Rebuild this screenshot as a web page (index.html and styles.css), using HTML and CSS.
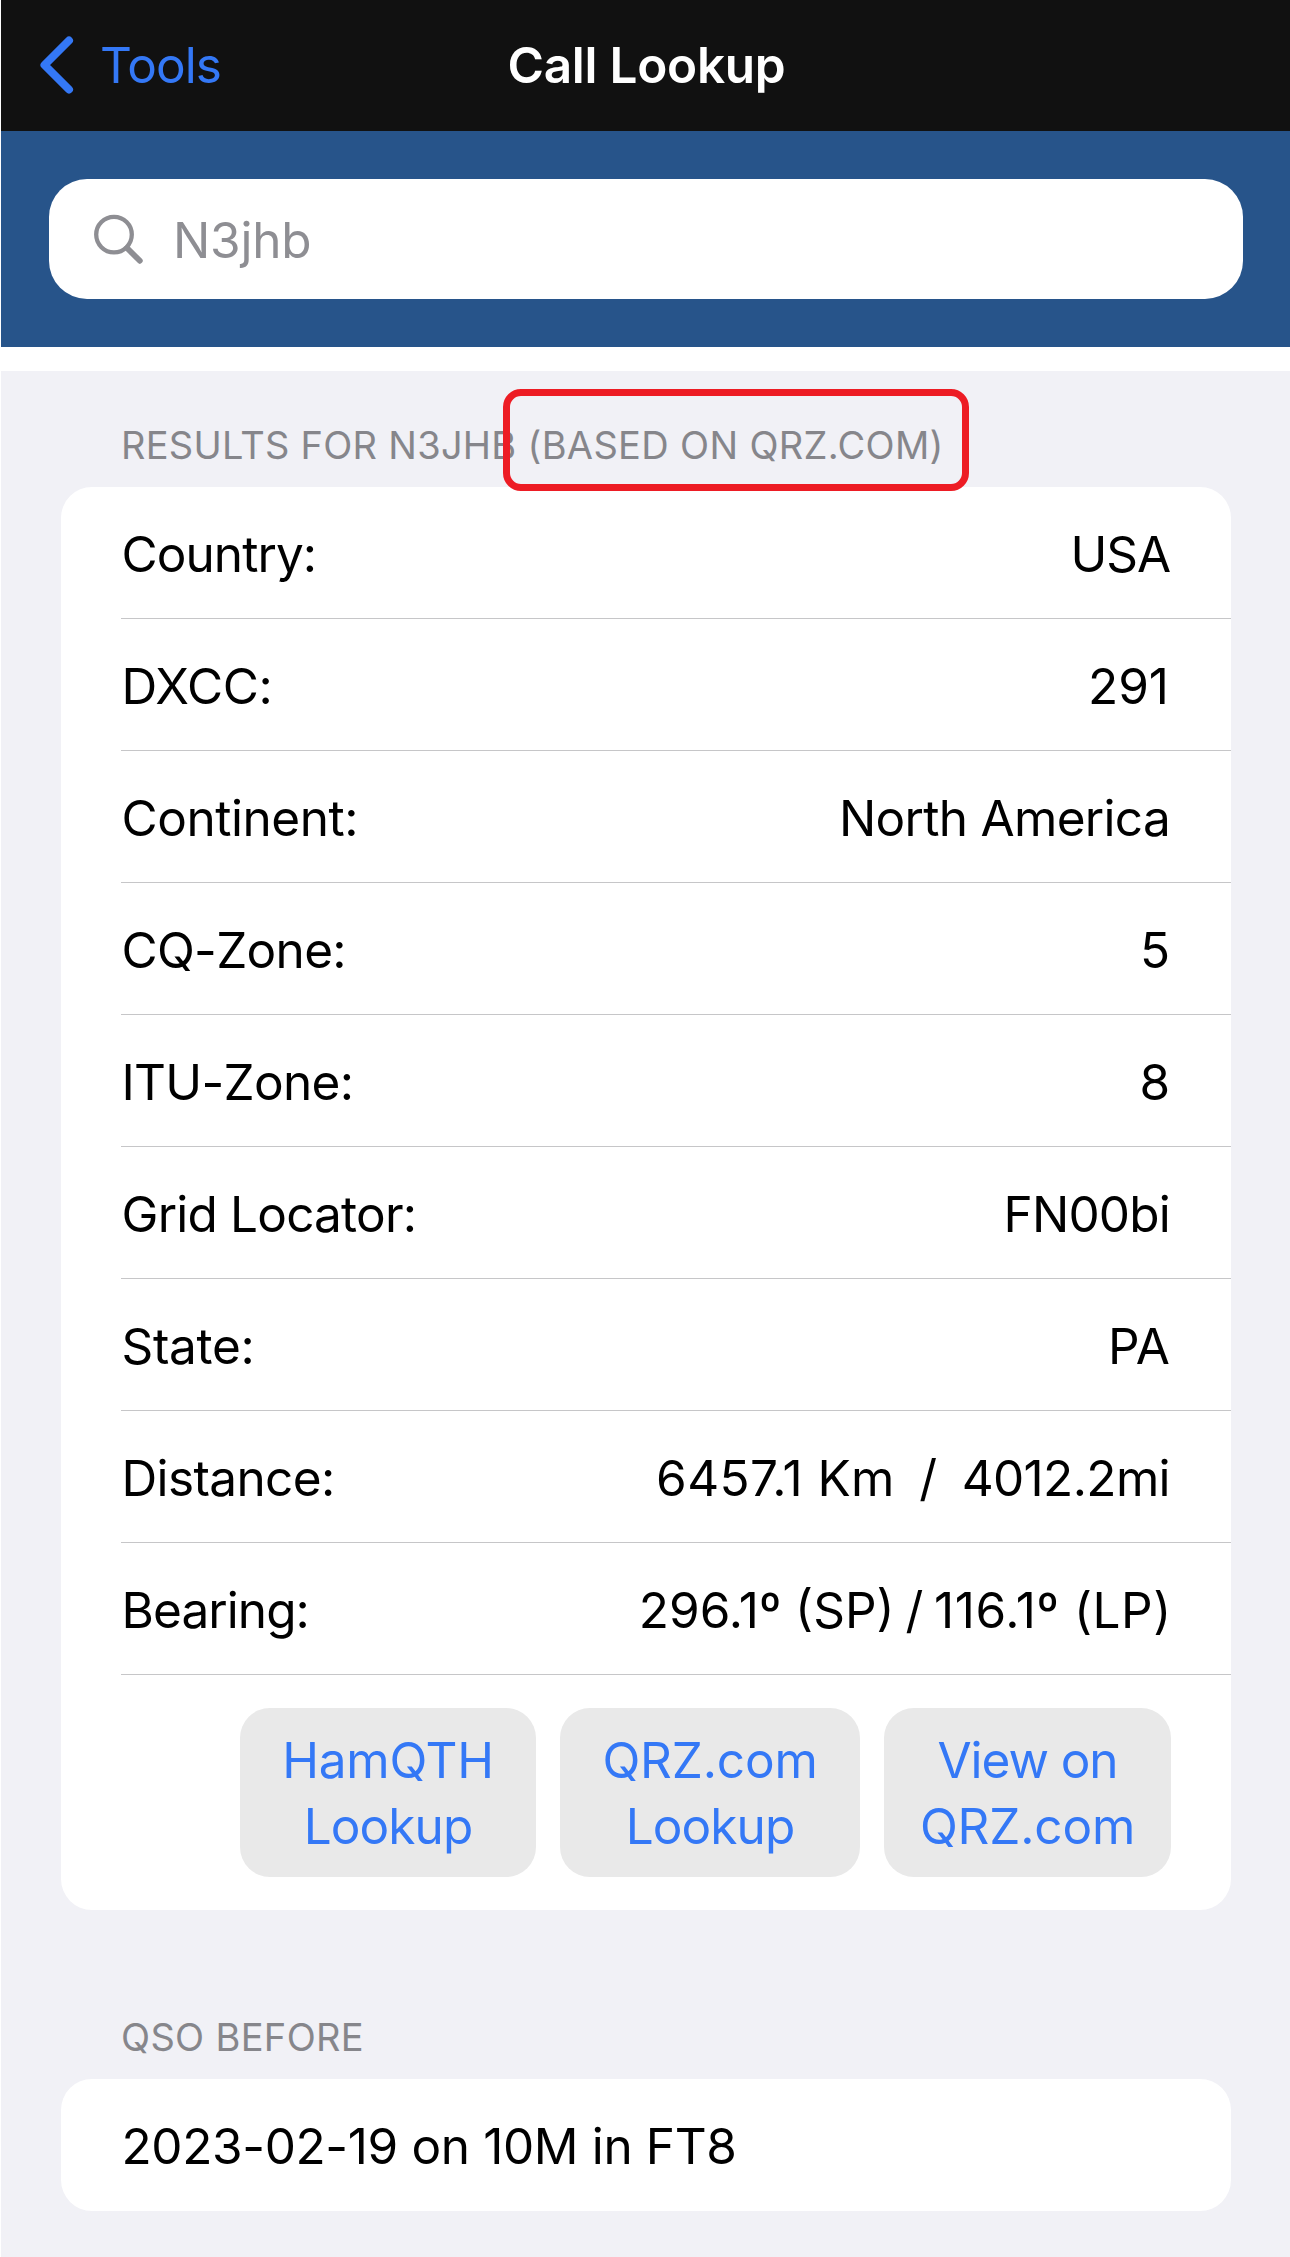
FILE: index.html
```
<!DOCTYPE html>
<html lang="en">
<head>
<meta charset="utf-8">
<title>Call Lookup</title>
<link rel="stylesheet" href="styles.css">
</head>
<body>
<header class="nav">
  <a class="back">
    <svg class="chevron" width="34" height="58" viewBox="0 0 34 58"><path d="M29 4.5 4.5 29 29 53.5" fill="none" stroke="#3478f6" stroke-width="8" stroke-linecap="round" stroke-linejoin="round"/></svg>
    <span class="back-label">Tools</span>
  </a>
  <h1 class="title">Call Lookup</h1>
</header>
<div class="search-bar">
  <div class="search-field">
    <svg class="search-icon" width="50" height="50" viewBox="0 0 50 50" fill="none" stroke="#8e8e93" stroke-linecap="round"><circle cx="20" cy="20.6" r="17.8" stroke-width="4.3"/><path d="M33 34 45.8 46.8" stroke-width="5.8"/></svg>
    <span class="query">N3jhb</span>
  </div>
</div>
<main class="content">
  <h2 class="section-title first">Results for N3jhb <span class="source">(based on QRZ.com)<span class="marker"></span></span></h2>
  <section class="card">
    <div class="row"><span class="label t9">Country:</span><span class="value t10">USA</span></div>
    <div class="row"><span class="label t4">DXCC:</span><span class="value number">291</span></div>
    <div class="row"><span class="label t5">Continent:</span><span class="value t7">North America</span></div>
    <div class="row"><span class="label t7">CQ-Zone:</span><span class="value">5</span></div>
    <div class="row"><span class="label t7">ITU-Zone:</span><span class="value">8</span></div>
    <div class="row"><span class="label t8">Grid Locator:</span><span class="value t8">FN00bi</span></div>
    <div class="row"><span class="label t3">State:</span><span class="value">PA</span></div>
    <div class="row"><span class="label t6">Distance:</span><span class="value"><span class="km">6457.1 Km</span><span class="wide-slash">  /  </span><span class="t6">4012.2mi</span></span></div>
    <div class="row bearing"><span class="label t9">Bearing:</span><span class="value">296.1º (SP)<span class="slash"> / </span><span class="long-path">116.1º (LP)</span></span></div>
    <div class="actions">
      <a class="button hamqth"><span class="t3">HamQTH</span><span class="t9">Lookup</span></a>
      <a class="button qrz"><span class="t2">QRZ.com</span><span class="t9">Lookup</span></a>
      <a class="button view"><span class="t10">View on</span><span class="t2">QRZ.com</span></a>
    </div>
  </section>
  <h2 class="section-title">QSO before</h2>
  <section class="card">
    <div class="row"><span class="label t4">2023-02-19 on 10M in FT8</span></div>
  </section>
</main>
</body>
</html>
```
FILE: styles.css
```
* { box-sizing: border-box; }

body {
  margin: 0;
  padding-left: 1px;
  width: 1290px;
  height: 2257px;
  overflow: hidden;
  display: flex;
  flex-direction: column;
  background: #fff;
  color: #000;
  font-family: Inter, "Liberation Sans", sans-serif;
  font-size: 49.5px;
  line-height: 66px;
}

.nav {
  height: 131px;
  flex: none;
  display: grid;
  grid-template-columns: 1fr auto 1fr;
  align-items: center;
  padding: 0 39px 1px;
  background: #111;
}

.back { display: flex; align-items: center; gap: 26px; color: #3478f6; }
.back-label { letter-spacing: -0.93px; }
.title { margin: 0; padding-left: 2px; color: #fff; font-size: inherit; font-weight: 600; letter-spacing: -0.27px; }

.search-bar { flex: none; height: 216px; padding: 48px 47px 48px 48px; background: #27548a; }
.search-field {
  height: 120px;
  display: flex;
  align-items: center;
  padding-left: 45px;
  gap: 29px;
  border-radius: 38px;
  background: #fff;
}
.query { padding-top: 2px; color: #8e8e93; letter-spacing: -0.21px; }

.content { flex: 1; margin-top: 24px; padding: 0 59px 0 60px; background: #f1f1f6; }

.section-title {
  margin: 0;
  height: 169px;
  padding: 103px 0 0 60px;
  color: #86868b;
  font-size: 38px;
  font-weight: 400;
  line-height: 48px;
  letter-spacing: 0.33px;
  text-transform: uppercase;
  white-space: nowrap;
}
.section-title.first { height: 116px; padding-top: 50px; letter-spacing: 0.27px; }
.source { position: relative; letter-spacing: 0.33px; }

/* Highlight around the data source */
.marker {
  position: absolute;
  left: -24px;
  top: -33px;
  width: 466px;
  height: 102px;
  border: 7px solid #ed1c24;
  border-radius: 18px;
}

.card { border-radius: 31px; background: #fff; }
.row {
  height: 132px;
  margin-left: 60px;
  padding: 2px 61px 0 0;
  display: flex;
  align-items: center;
  justify-content: space-between;
  box-shadow: inset 0 -1px #c6c6c8;
}
.row:last-child { box-shadow: none; }
.label, .value { white-space: pre; }
.label { padding-left: 0.5px; }

.number { padding-right: 1px; }
.km { letter-spacing: 0.4px; }
.wide-slash { word-spacing: -1.7px; }
.row.bearing { padding-right: 59px; }
.slash { word-spacing: -2.5px; letter-spacing: -0.4px; }
.long-path { letter-spacing: 0.6px; }
.t2 { letter-spacing: -0.18px; }
.t3 { letter-spacing: -0.3px; }
.t4 { letter-spacing: -0.36px; }
.t5 { letter-spacing: -0.45px; }
.t6 { letter-spacing: -0.62px; }
.t7 { letter-spacing: -0.7px; }
.t8 { letter-spacing: -0.8px; }
.t9 { letter-spacing: -0.92px; }
.t10 { letter-spacing: -1.05px; }

.actions { display: flex; justify-content: flex-end; padding: 33px 60px 33px 0; }
.button {
  height: 169px;
  display: flex;
  flex-direction: column;
  align-items: center;
  justify-content: center;
  border-radius: 30px;
  background: #e9e9e9;
  color: #3478f6;
}
.hamqth { width: 296px; margin-right: 24px; }
.qrz { width: 300px; margin-right: 24px; }
.view { width: 287px; }
```
